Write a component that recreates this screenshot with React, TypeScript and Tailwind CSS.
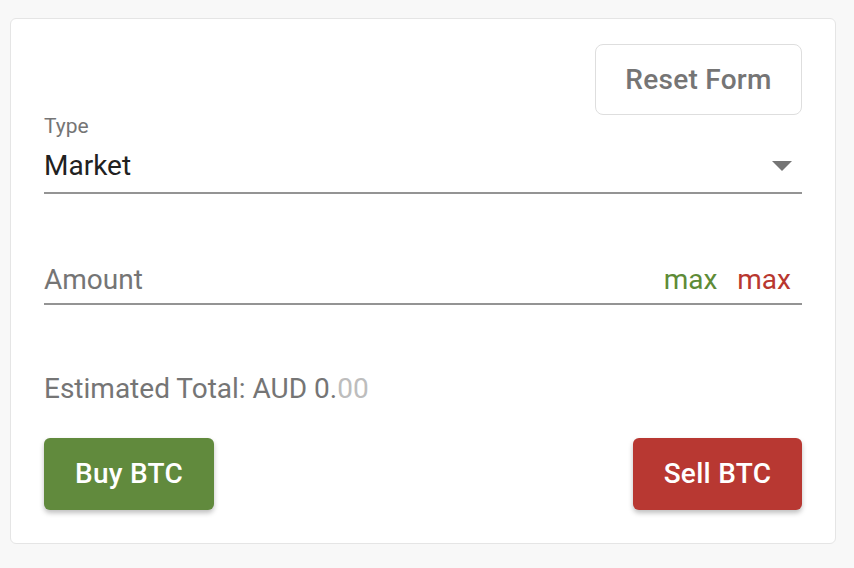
export default function App() {
  return (
    <div className="min-h-screen bg-[#f8f8f8] pt-[18px] pl-[10px] font-['Roboto',sans-serif]">
      <div className="h-[526px] w-[826px] rounded-[6px] border border-[#e5e5e5] bg-white px-[33px] pt-[25px]">
        <div className="flex justify-end">
          <button className="h-[71px] w-[207px] rounded-[8px] border border-[#dedede] bg-white text-[28px] font-medium tracking-[0.01em] text-[#757575]">
            Reset Form
          </button>
        </div>

        <div className="-mt-[1px] text-[21px] leading-[24px] text-[#757575]">Type</div>
        <div className="mt-[12px] flex items-center justify-between border-b-2 border-[#949494] pb-[10px]">
          <span className="text-[28px] leading-[32px] text-[#212121]">Market</span>
          <svg width="20" height="10" viewBox="0 0 20 10" className="mr-[10px]">
            <path d="M0 0h20L10 10z" fill="#757575" />
          </svg>
        </div>

        <div className="mt-[70px] flex items-center justify-between border-b-2 border-[#949494] pb-[7px]">
          <span className="text-[28px] leading-[32px] text-[#757575]">Amount</span>
          <div className="mr-[11px] flex gap-[20px] text-[28px] leading-[32px]">
            <span className="text-[#5e8b37]">max</span>
            <span className="text-[#b8372f]">max</span>
          </div>
        </div>

        <div className="mt-[68px] text-[28px] leading-[32px] text-[#757575]">
          Estimated Total: AUD 0.<span className="text-[#bdbdbd]">00</span>
        </div>

        <div className="mt-[33px] flex justify-between">
          <button className="h-[72px] w-[170px] rounded-[6px] bg-[#618a3d] text-[28px] font-medium tracking-[0.01em] text-white shadow-[0_3px_5px_rgba(0,0,0,0.25)]">
            Buy BTC
          </button>
          <button className="h-[72px] w-[169px] rounded-[6px] bg-[#b83832] text-[28px] font-medium tracking-[0.01em] text-white shadow-[0_3px_5px_rgba(0,0,0,0.25)]">
            Sell BTC
          </button>
        </div>
      </div>
    </div>
  );
}
